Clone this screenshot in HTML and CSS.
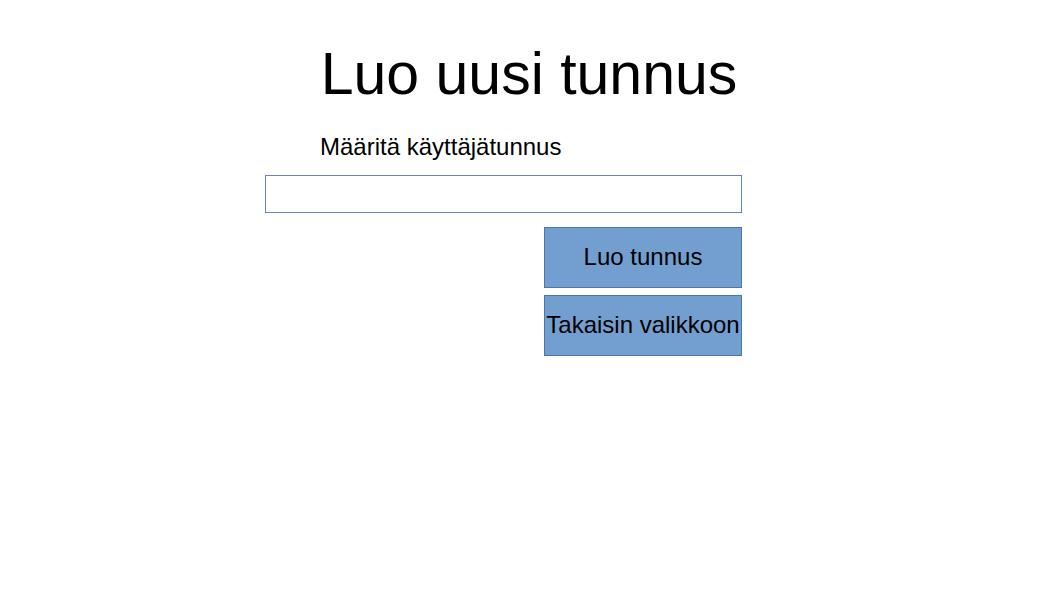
FILE: index.html
```html
<!DOCTYPE html>
<html lang="fi">
<head>
<meta charset="utf-8">
<title>Luo uusi tunnus</title>
<link rel="stylesheet" href="styles.css">
</head>
<body>
<main class="page">
  <h1 class="title">Luo uusi tunnus</h1>
  <form class="form">
    <label class="label" for="user">Määritä käyttäjätunnus</label>
    <input class="field" id="user" type="text">
    <div class="actions">
      <button class="btn" type="button">Luo tunnus</button>
      <button class="btn" type="button">Takaisin valikkoon</button>
    </div>
  </form>
</main>
</body>
</html>
```

FILE: styles.css
```css
html, body {
  margin: 0;
  padding: 0;
  background: #ffffff;
}

body {
  font-family: "Liberation Sans", Arial, sans-serif;
  color: #000000;
}

.page {
  display: flex;
  flex-direction: column;
}

.title {
  margin: 45px 0 0 0;
  font-size: 59px;
  line-height: 58px;
  font-weight: normal;
  text-align: center;
}

.form {
  margin: 32px 0 0 265px;
  width: 477px;
  display: flex;
  flex-direction: column;
}

.label {
  display: block;
  padding-left: 55px;
  font-size: 24px;
  line-height: 24px;
}

.field {
  box-sizing: border-box;
  margin: 16px 0 0 0;
  width: 477px;
  height: 38px;
  border: 1px solid #6a86ae;
  background: #ffffff;
  padding: 0 6px;
  font-family: inherit;
  font-size: 20px;
  outline: none;
}

.actions {
  margin-top: 14px;
  display: flex;
  flex-direction: column;
  align-items: flex-end;
  gap: 7px;
}

.btn {
  box-sizing: border-box;
  width: 198px;
  height: 61px;
  padding: 0 0 2px 0;
  border: 1px solid #4a76b0;
  background: #729fcf;
  color: #000000;
  font-family: inherit;
  font-size: 24px;
  line-height: 24px;
  white-space: nowrap;
  cursor: pointer;
}
```
